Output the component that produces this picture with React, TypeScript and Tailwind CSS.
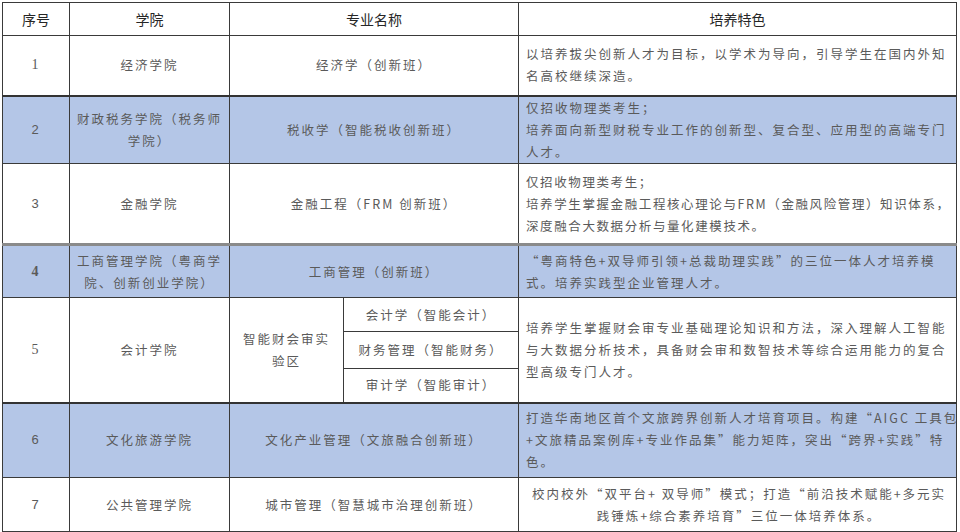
import React from "react";

const cjk = { fontFamily: '"Noto Sans CJK SC", "Noto Sans", sans-serif' };
const serif = { fontFamily: '"Liberation Serif", serif' };
const sans = { fontFamily: '"Liberation Sans", sans-serif' };

const cell = "border border-[#3a3a3a] p-0 text-[12.5px] tracking-[2px] text-[#5a5a5a] leading-[22px] align-middle";
const center = `${cell} text-center px-1`;
const desc = `${cell} text-left pl-[7px] pr-1 whitespace-nowrap`;
const blue = "bg-[#b4c6e7]";

export default function App() {
  return (
    <div className="w-[960px] h-[532px] bg-white pl-[2px] pt-[2px]" style={cjk}>
      <table className="border-collapse table-fixed w-[954px]">
        <colgroup>
          <col className="w-[67px]" />
          <col className="w-[160px]" />
          <col className="w-[114px]" />
          <col className="w-[175px]" />
          <col className="w-[438px]" />
        </colgroup>
        <thead>
          <tr className="h-[33px] text-[14px] text-[#262626]">
            <th className="border border-[#3a3a3a] p-0 font-normal">序号</th>
            <th className="border border-[#3a3a3a] p-0 font-normal">学院</th>
            <th colSpan={2} className="border border-[#3a3a3a] p-0 font-normal">专业名称</th>
            <th className="border border-[#3a3a3a] p-0 font-normal">培养特色</th>
          </tr>
        </thead>
        <tbody>
          <tr className="h-[60px]">
            <td className={`${center} text-[14px]`} style={serif}>1</td>
            <td className={center}>经济学院</td>
            <td colSpan={2} className={center}>经济学（创新班）</td>
            <td className={desc}>
              以培养拔尖创新人才为目标，以学术为导向，引导学生在国内外知
              <br />
              名高校继续深造。
            </td>
          </tr>
          <tr className={`h-[68px] ${blue} border-t-2 border-t-[#333]`}>
            <td className={`${center} text-[13px]`} style={sans}>2</td>
            <td className={center}>
              财政税务学院（税务师
              <br />
              学院）
            </td>
            <td colSpan={2} className={center}>税收学（智能税收创新班）</td>
            <td className={desc}>
              仅招收物理类考生；
              <br />
              培养面向新型财税专业工作的创新型、复合型、应用型的高端专门
              <br />
              人才。
            </td>
          </tr>
          <tr className="h-[81px]">
            <td className={`${center} text-[13px]`} style={sans}>3</td>
            <td className={center}>金融学院</td>
            <td colSpan={2} className={center}>金融工程（FRM 创新班）</td>
            <td className={`${desc} !tracking-[1.6px]`}>
              仅招收物理类考生；
              <br />
              培养学生掌握金融工程核心理论与FRM（金融风险管理）知识体系，
              <br />
              深度融合大数据分析与量化建模技术。
            </td>
          </tr>
          <tr className={`h-[53px] ${blue} border-t-[3px] border-t-[#8a8a8a]`}>
            <td className={`${center} text-[14px] font-bold`} style={serif}>4</td>
            <td className={center}>
              工商管理学院（粤商学
              <br />
              院、创新创业学院）
            </td>
            <td colSpan={2} className={center}>工商管理（创新班）</td>
            <td className={desc}>
              “粤商特色+双导师引领+总裁助理实践”的三位一体人才培养模
              <br />
              式。培养实践型企业管理人才。
            </td>
          </tr>
          <tr className="h-[34px]">
            <td rowSpan={3} className={`${center} text-[14px]`} style={serif}>5</td>
            <td rowSpan={3} className={center}>会计学院</td>
            <td rowSpan={3} className={center}>
              智能财会审实
              <br />
              验区
            </td>
            <td className={center}>会计学（智能会计）</td>
            <td rowSpan={3} className={desc}>
              培养学生掌握财会审专业基础理论知识和方法，深入理解人工智能
              <br />
              与大数据分析技术，具备财会审和数智技术等综合运用能力的复合
              <br />
              型高级专门人才。
            </td>
          </tr>
          <tr className="h-[37px]">
            <td className={center}>财务管理（智能财务）</td>
          </tr>
          <tr className="h-[34px]">
            <td className={center}>审计学（智能审计）</td>
          </tr>
          <tr className={`h-[75px] ${blue} border-t-2 border-t-[#333]`}>
            <td className={`${center} text-[13px]`} style={sans}>6</td>
            <td className={center}>文化旅游学院</td>
            <td colSpan={2} className={center}>文化产业管理（文旅融合创新班）</td>
            <td className={desc}>
              打造华南地区首个文旅跨界创新人才培育项目。构建“AIGC 工具包
              <br />
              +文旅精品案例库+专业作品集”能力矩阵，突出“跨界+实践”特
              <br />
              色。
            </td>
          </tr>
          <tr className="h-[54px]">
            <td className={`${center} text-[13px]`} style={sans}>7</td>
            <td className={center}>公共管理学院</td>
            <td colSpan={2} className={center}>城市管理（智慧城市治理创新班）</td>
            <td className={`${desc} !text-center`}>
              校内校外“双平台+ 双导师”模式；打造“前沿技术赋能+多元实
              <br />
              践锤炼+综合素养培育”三位一体培养体系。
            </td>
          </tr>
        </tbody>
      </table>
    </div>
  );
}
